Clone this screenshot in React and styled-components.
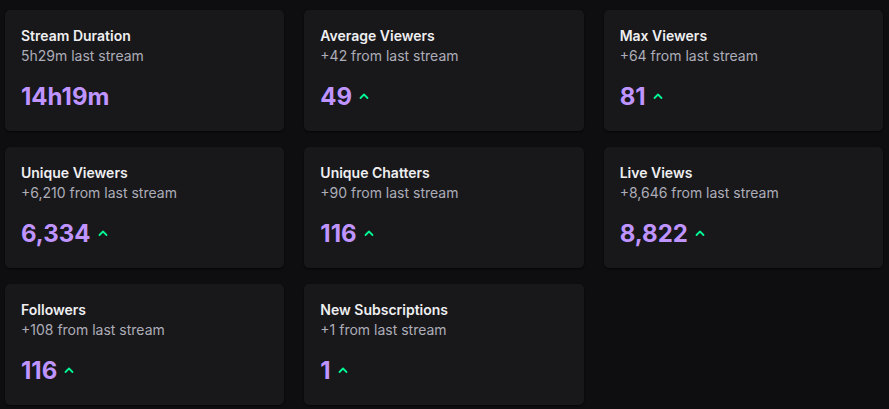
import styled, { createGlobalStyle } from "styled-components";

const GlobalStyle = createGlobalStyle`
    html, body {
        margin: 0;
        padding: 0;
        background: #0e0e10;
    }
    body {
        font-family: Inter, "Noto Sans", sans-serif;
        -webkit-font-smoothing: antialiased;
    }
`;

const Page = styled.div`
        padding: 10px 0 4px 5px;
    `,
    Grid = styled.div`
        display: grid;
        width: 878px;
        grid-template-columns: repeat(3, 1fr);
        column-gap: 20px;
        row-gap: 16px;
    `,
    Card = styled.div`
        background: #18181b;
        border-radius: 5px;
        height: 121px;
        box-sizing: border-box;
        padding: 16px 16px 0 16px;
        box-shadow: 0 1px 2px rgba(0, 0, 0, 0.6);
    `,
    Title = styled.div`
        color: #efeff1;
        font-size: 14px;
        line-height: 20px;
        font-weight: 600;
    `,
    Sub = styled.div`
        color: #adadb8;
        font-size: 14px;
        line-height: 20px;
        font-weight: 400;
    `,
    ValueRow = styled.div`
        display: flex;
        align-items: center;
        gap: 7px;
        margin-top: 16px;
    `,
    Value = styled.span`
        color: #bf94ff;
        font-size: 24px;
        line-height: 30px;
        font-weight: 700;
    `,
    Up = styled.svg`
        width: 10px;
        height: 8px;
        margin-top: -3px;
    `;

const stats = [
    { title: "Stream Duration", sub: "5h29m last stream", value: "14h19m", up: false },
    { title: "Average Viewers", sub: "+42 from last stream", value: "49", up: true },
    { title: "Max Viewers", sub: "+64 from last stream", value: "81", up: true },
    { title: "Unique Viewers", sub: "+6,210 from last stream", value: "6,334", up: true },
    { title: "Unique Chatters", sub: "+90 from last stream", value: "116", up: true },
    { title: "Live Views", sub: "+8,646 from last stream", value: "8,822", up: true },
    { title: "Followers", sub: "+108 from last stream", value: "116", up: true },
    { title: "New Subscriptions", sub: "+1 from last stream", value: "1", up: true },
];

const Caret = () => (
    <Up viewBox="0 0 10 8">
        <path d="M1.5 6 L5 2.5 L8.5 6" fill="none" stroke="#00f593" strokeWidth="1.8" strokeLinecap="round" strokeLinejoin="round" />
    </Up>
);

const App = () => {
    return (
        <>
            <GlobalStyle />
            <Page>
                <Grid>
                    {stats.map((s, idx) => (
                        <Card key={idx}>
                            <Title>{s.title}</Title>
                            <Sub>{s.sub}</Sub>
                            <ValueRow>
                                <Value>{s.value}</Value>
                                {s.up && <Caret />}
                            </ValueRow>
                        </Card>
                    ))}
                </Grid>
            </Page>
        </>
    );
};

export default App;
